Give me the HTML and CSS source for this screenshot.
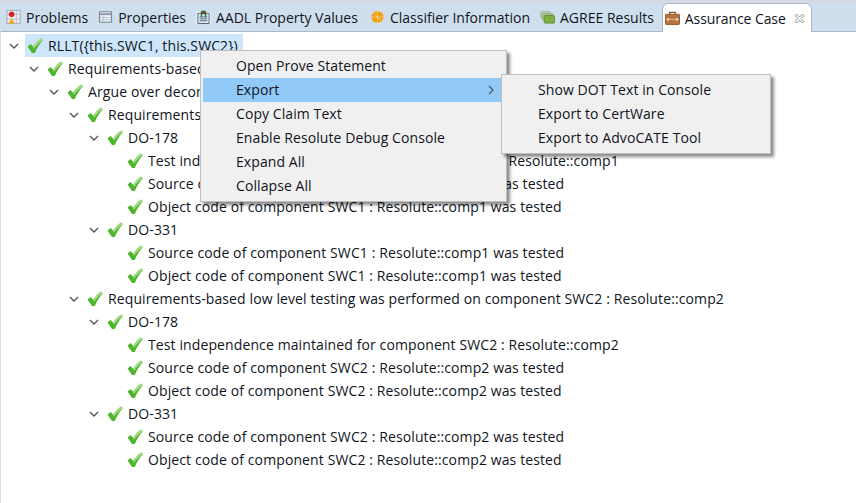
FILE: index.html
```html
<!DOCTYPE html>
<html lang="en">
  <head>
    <meta charset="utf-8">
    <link rel="stylesheet" href="styles.css">
    <title>Assurance Case</title>
  </head>
  <body>
    <svg class="defs" width="0" height="0">
      <symbol id="check" viewBox="0 0 16 16">
        <path d="M0.5 8.5 L3.6 6 L6.2 8.8 C8.2 5.6 10.8 2.8 14.2 0.5 L15.8 2.2 C12.6 5.6 10 9.6 7.8 15 L5 15 Z" fill="#4eb52c"/>
        <path d="M6.2 8.8 C8.2 5.6 10.8 2.8 14.2 0.5 L15.8 2.2 C12.6 4.2 9.6 7.2 6.8 11 Z" fill="#a2dc82"/>
      </symbol>
      <symbol id="open" viewBox="0 0 10 10">
        <path d="M1 3 L5 7 L9 3" fill="none" stroke="#555" stroke-width="1.4"/>
      </symbol>
    </svg>

    <header class="tabbar">
      <div class="tab">
        <svg class="ico" viewBox="0 0 16 16">
          <rect x="1" y="1" width="14" height="14" fill="#eef0f4" stroke="#9aa5b5"/>
          <path d="M11 1v14M1 5h14M1 10h14" stroke="#b4bdca"/>
          <circle cx="6" cy="5" r="3" fill="#d8232a"/>
          <path d="M2.5 15 L6 9 L9.5 15 Z" fill="#f4a81c"/>
        </svg>
        <span>Problems</span>
      </div>
      <div class="tab">
        <svg class="ico" viewBox="0 0 16 16">
          <rect x="1.5" y="2.5" width="13" height="11" fill="#f4f5f8" stroke="#6d7a8c"/>
          <path d="M1.5 5h13" stroke="#8997aa" stroke-width="2"/>
          <path d="M5.5 6v7M2 8.5h12M2 11h12" stroke="#b5bfcc"/>
        </svg>
        <span>Properties</span>
      </div>
      <div class="tab">
        <svg class="ico" viewBox="0 0 16 16">
          <rect x="0.5" y="2.5" width="15" height="13" fill="#fff"/>
          <rect x="2" y="4" width="12" height="11" fill="#dfe6ee" stroke="#4d5c70"/>
          <path d="M4 8h8M4 10h8M4 12h8" stroke="#4d6a8c"/>
          <path d="M5 8 V3 Q5 1 8 1 Q11 1 11 3 V8 H9.5 V5 H6.5 V8 Z" fill="#1f7a3a"/>
          <rect x="6.5" y="2.5" width="3" height="2" fill="#c8202a"/>
        </svg>
        <span>AADL Property Values</span>
      </div>
      <div class="tab tab-gap">
        <svg class="ico" viewBox="0 0 16 16">
          <circle cx="8" cy="8" r="6.5" fill="#f0a010"/>
          <path d="M8 2v12M2 8h12M4 4l8 8" stroke="#fbe3a8" stroke-width="1" stroke-dasharray="2 1.5"/>
        </svg>
        <span>Classifier Information</span>
      </div>
      <div class="tab">
        <svg class="ico" viewBox="0 0 16 16">
          <rect x="0.5" y="2" width="10" height="7" rx="1" fill="#c3d4bb" stroke="#a6b9a0"/>
          <rect x="2.5" y="4" width="11" height="7" rx="1" fill="#a9c494" stroke="#8aa67d"/>
          <rect x="4.5" y="6.5" width="11" height="8" rx="1" fill="#7fae45" stroke="#5c8a32"/>
        </svg>
        <span>AGREE Results</span>
      </div>
      <div class="tab tab-active">
        <svg class="ico" viewBox="0 0 16 16">
          <path d="M5 4 V2 H11 V4" fill="none" stroke="#8a5a30" stroke-width="1.4"/>
          <rect x="0.5" y="4" width="15" height="11" rx="1" fill="#b5753d" stroke="#8d5a2e"/>
          <path d="M1 9.5h14" stroke="#dca878" stroke-width="1.4"/>
          <path d="M3.5 8v3M12.5 8v3" stroke="#e8e0d4" stroke-width="1.6"/>
        </svg>
        <span>Assurance Case</span>
        <svg class="close" viewBox="0 0 11 11">
          <path d="M1 2.5 L2.5 1 L5.5 4 L8.5 1 L10 2.5 L7 5.5 L10 8.5 L8.5 10 L5.5 7 L2.5 10 L1 8.5 L4 5.5 Z" fill="#fff" stroke="#8f8f8f"/>
        </svg>
      </div>
      <div class="tab-rest"></div>
    </header>

    <main class="tree">
      <div class="row l0"><svg class="tw"><use href="#open"/></svg><span class="sel"><svg class="ok"><use href="#check"/></svg><span class="lbl">RLLT({this.SWC1, this.SWC2})</span></span></div>
      <div class="row l1"><svg class="tw"><use href="#open"/></svg><svg class="ok"><use href="#check"/></svg><span class="lbl">Requirements-based low level testing</span></div>
      <div class="row l2"><svg class="tw"><use href="#open"/></svg><svg class="ok"><use href="#check"/></svg><span class="lbl">Argue over decomposition of components</span></div>
      <div class="row l3"><svg class="tw"><use href="#open"/></svg><svg class="ok"><use href="#check"/></svg><span class="lbl">Requirements-based low level testing was performed on component SWC1 : Resolute::comp1</span></div>
      <div class="row l4"><svg class="tw"><use href="#open"/></svg><svg class="ok"><use href="#check"/></svg><span class="lbl">DO-178</span></div>
      <div class="row l5"><svg class="ok"><use href="#check"/></svg><span class="lbl">Test independence maintained for component SWC1 : Resolute::comp1</span></div>
      <div class="row l5"><svg class="ok"><use href="#check"/></svg><span class="lbl">Source code of component SWC1 : Resolute::comp1 was tested</span></div>
      <div class="row l5"><svg class="ok"><use href="#check"/></svg><span class="lbl">Object code of component SWC1 : Resolute::comp1 was tested</span></div>
      <div class="row l4"><svg class="tw"><use href="#open"/></svg><svg class="ok"><use href="#check"/></svg><span class="lbl">DO-331</span></div>
      <div class="row l5"><svg class="ok"><use href="#check"/></svg><span class="lbl">Source code of component SWC1 : Resolute::comp1 was tested</span></div>
      <div class="row l5"><svg class="ok"><use href="#check"/></svg><span class="lbl">Object code of component SWC1 : Resolute::comp1 was tested</span></div>
      <div class="row l3"><svg class="tw"><use href="#open"/></svg><svg class="ok"><use href="#check"/></svg><span class="lbl">Requirements-based low level testing was performed on component SWC2 : Resolute::comp2</span></div>
      <div class="row l4"><svg class="tw"><use href="#open"/></svg><svg class="ok"><use href="#check"/></svg><span class="lbl">DO-178</span></div>
      <div class="row l5"><svg class="ok"><use href="#check"/></svg><span class="lbl">Test independence maintained for component SWC2 : Resolute::comp2</span></div>
      <div class="row l5"><svg class="ok"><use href="#check"/></svg><span class="lbl">Source code of component SWC2 : Resolute::comp2 was tested</span></div>
      <div class="row l5"><svg class="ok"><use href="#check"/></svg><span class="lbl">Object code of component SWC2 : Resolute::comp2 was tested</span></div>
      <div class="row l4"><svg class="tw"><use href="#open"/></svg><svg class="ok"><use href="#check"/></svg><span class="lbl">DO-331</span></div>
      <div class="row l5"><svg class="ok"><use href="#check"/></svg><span class="lbl">Source code of component SWC2 : Resolute::comp2 was tested</span></div>
      <div class="row l5"><svg class="ok"><use href="#check"/></svg><span class="lbl">Object code of component SWC2 : Resolute::comp2 was tested</span></div>
    </main>

    <ul class="menu menu-main">
      <li>Open Prove Statement</li>
      <li class="hot">Export<svg class="arrow" viewBox="0 0 6 10"><path d="M1 1 L5 5 L1 9" fill="none" stroke="#555" stroke-width="1.2"/></svg></li>
      <li>Copy Claim Text</li>
      <li>Enable Resolute Debug Console</li>
      <li>Expand All</li>
      <li>Collapse All</li>
    </ul>

    <ul class="menu menu-sub">
      <li>Show DOT Text in Console</li>
      <li>Export to CertWare</li>
      <li>Export to AdvoCATE Tool</li>
    </ul>
  </body>
</html>
```

FILE: styles.css
```css
* { box-sizing: border-box; }
html, body {
  margin: 0;
  height: 100%;
  overflow: hidden;
}
body {
  background: #fff;
  color: #10141c;
  font-family: "Open Sans", "Noto Sans", sans-serif;
  font-size: 14px;
  border-top: 3px solid #d6d9e4;
  border-left: 1px solid #d9dce6;
  position: relative;
}
.defs { position: absolute; }

/* tab strip */
.tabbar {
  display: flex;
  height: 29px;
  background: #d0dfee;
  border-bottom: 1px solid #a9b8ca;
  padding-left: 4px;
}
.tab {
  display: flex;
  align-items: center;
  gap: 5px;
  padding: 0 9px 0 1px;
  white-space: nowrap;
}
.tab-gap { margin-left: 2px; }
.tab .ico {
  width: 15px;
  height: 16px;
  flex: none;
}
.tab-active {
  background: #fff;
  height: 29px;
  margin-left: -1px;
  padding: 0 6px 0 2px;
  border: 1px solid #a9b8ca;
  border-bottom: 0;
  border-radius: 6px 6px 0 0;
  letter-spacing: -0.1px;
}
.close {
  width: 11px;
  height: 11px;
  margin-left: 3px;
}
.tab-rest { flex: 1; }

/* tree */
.tree {
  padding-top: 2px;
  letter-spacing: 0.11px;
}
.row {
  display: flex;
  align-items: center;
  height: 23px;
  white-space: nowrap;
}
.l0 { padding-left: 8px; }
.l1 { padding-left: 28px; }
.l2 { padding-left: 48px; }
.l3 { padding-left: 68px; }
.l4 { padding-left: 88px; }
.l5 { padding-left: 126px; }
.tw {
  width: 10px;
  height: 10px;
  margin-right: 8px;
  flex: none;
}
.ok {
  width: 16px;
  height: 16px;
  flex: none;
}
.lbl { margin-left: 5px; }
.sel {
  display: flex;
  align-items: center;
  height: 23px;
  margin-left: -2px;
  padding: 0 5px 0 2px;
  background: #cde6fb;
}

/* context menus */
.menu {
  position: absolute;
  margin: 0;
  padding: 3px 2px;
  list-style: none;
  background: #f0f0f0;
  border: 1px solid #bfbfbf;
  box-shadow: 3px 3px 3px rgba(0, 0, 0, .45);
  letter-spacing: 0.08px;
}
.menu li {
  position: relative;
  height: 24px;
  line-height: 24px;
  white-space: nowrap;
}
.menu .hot { background: #91c9f7; }
.menu-main {
  left: 199px;
  top: 47px;
  width: 307px;
}
.menu-main li { padding-left: 33px; }
.menu-sub {
  left: 500px;
  top: 71px;
  width: 270px;
}
.menu-sub li { padding-left: 34px; }
.arrow {
  position: absolute;
  right: 10px;
  top: 7px;
  width: 6px;
  height: 10px;
}
```
